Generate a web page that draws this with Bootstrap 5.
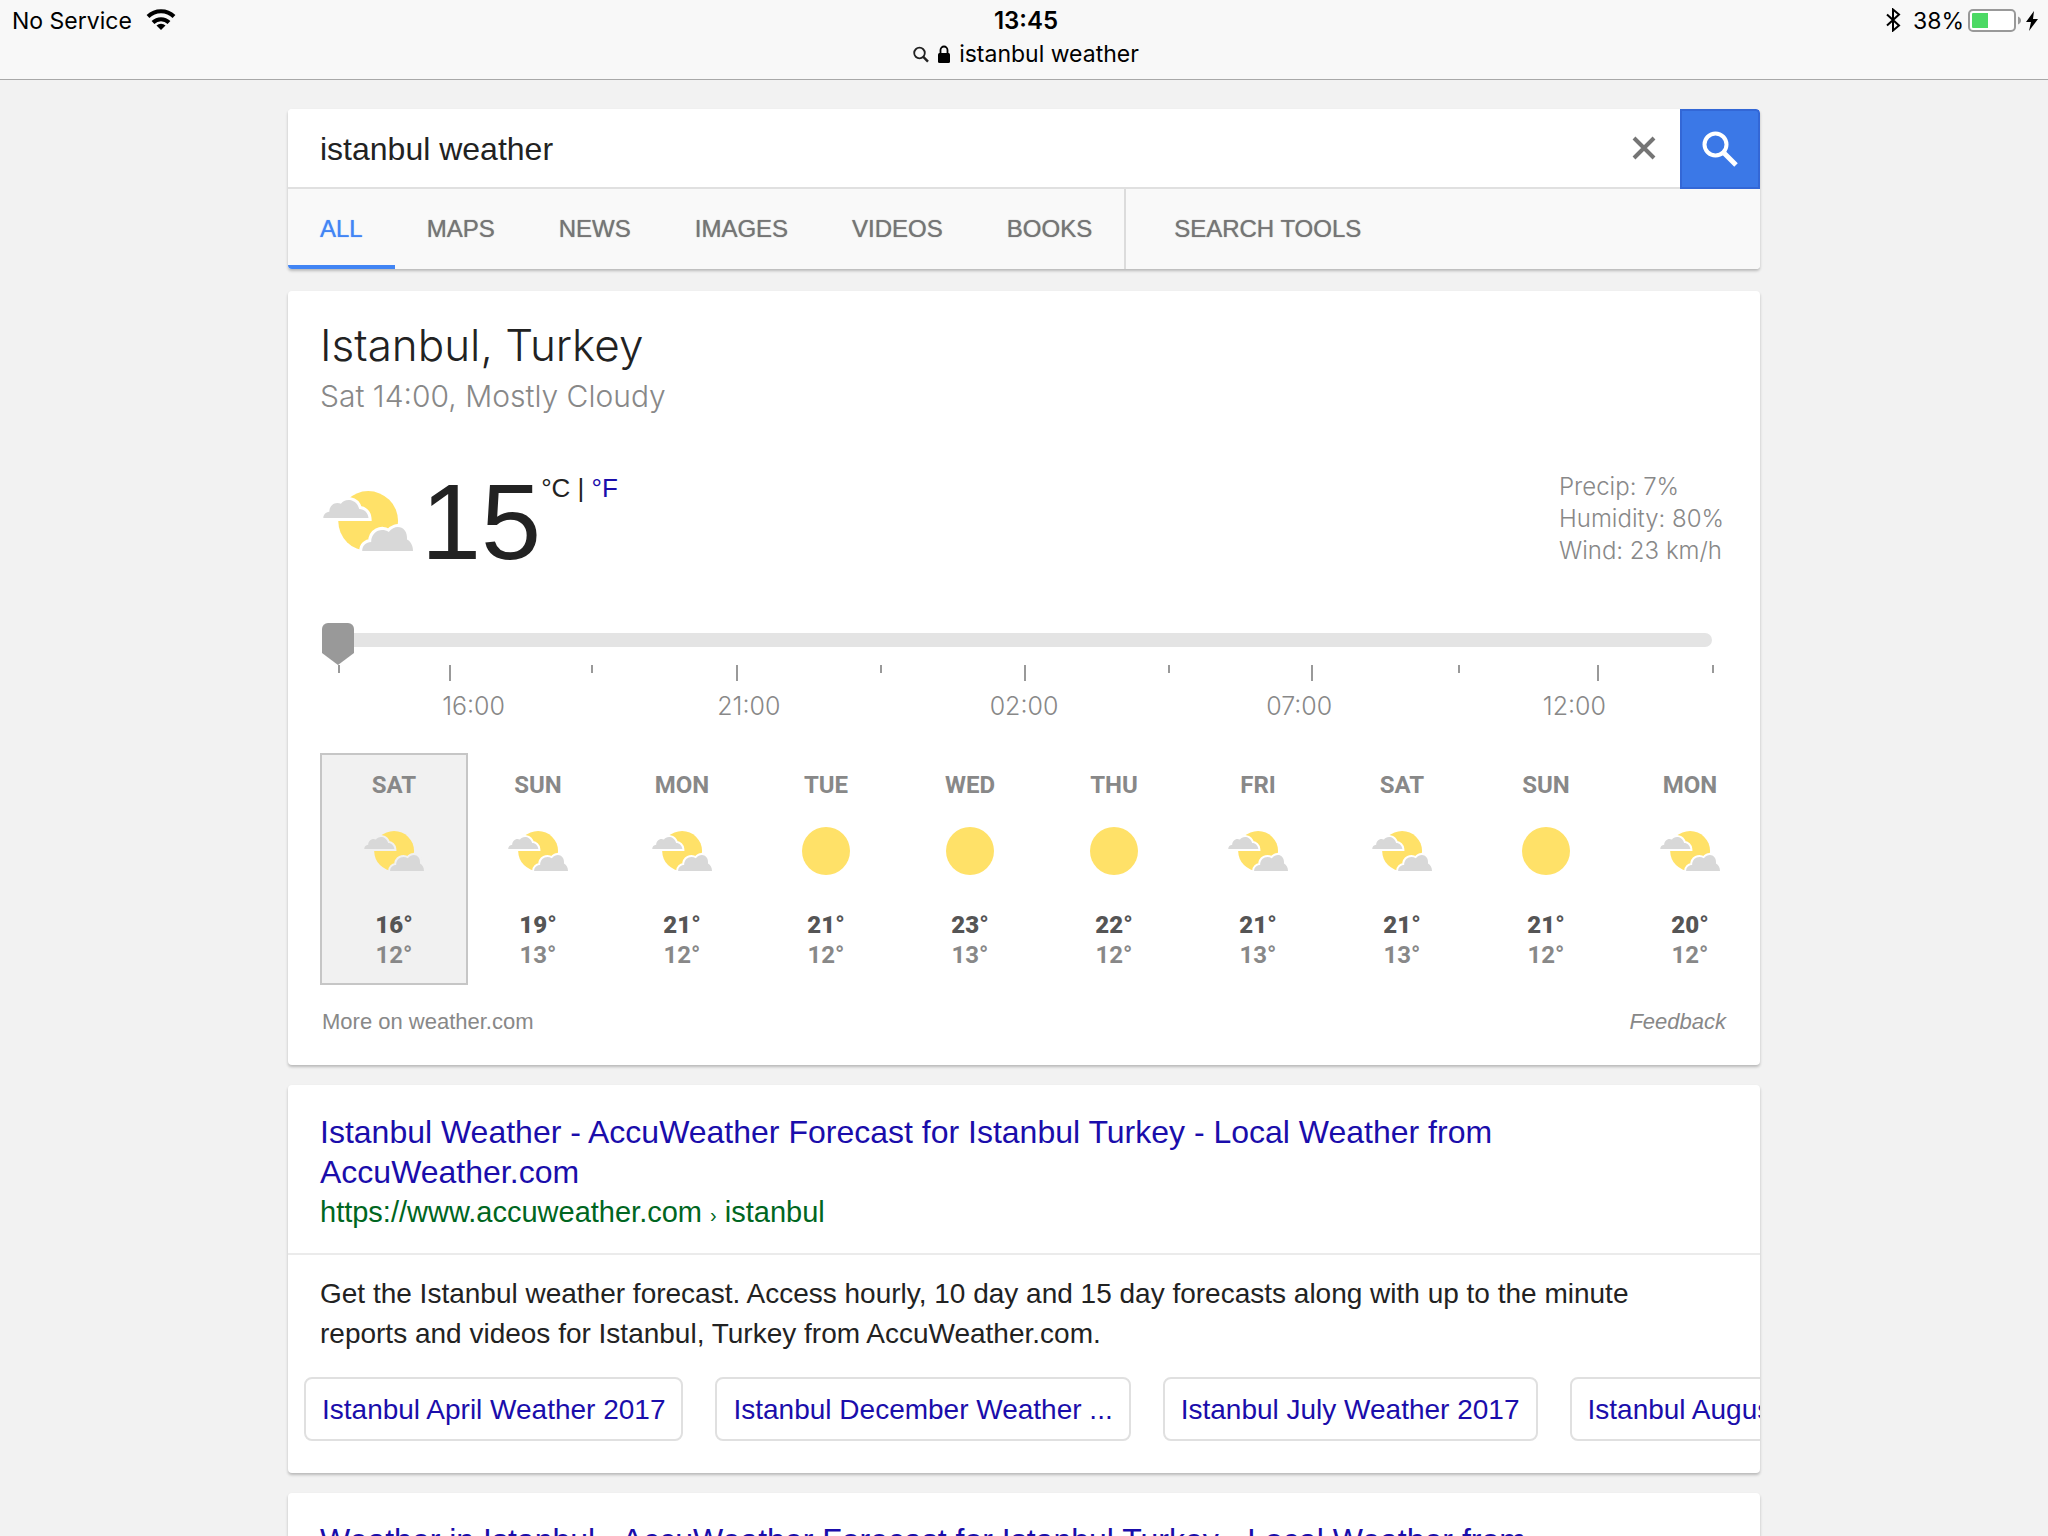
<!DOCTYPE html>
<html lang="en">
<head>
<meta charset="utf-8">
<meta name="viewport" content="width=device-width, initial-scale=1">
<title>istanbul weather</title>
<link href="https://cdn.jsdelivr.net/npm/bootstrap@5.3.0/dist/css/bootstrap.min.css" rel="stylesheet">
<style>
:root{--cell-bg:#fff;--ink:#222;--muted:#888;--link:#1a0dab}
body{background:#f2f2f2;color:var(--ink);font-family:"Liberation Sans",Arial,sans-serif;font-size:28px;line-height:40px;overflow:hidden;height:100vh}
a{color:var(--link);text-decoration:none}
.topbar{height:80px;background:#f8f8f8;border-bottom:1px solid #a8a8a8;font-family:Inter,sans-serif;font-size:23px;line-height:34px;color:#000;padding:4px 8px 0 12px}
.topbar>div{flex:1 1 0}
.clock{font-size:24px;line-height:33px}
.wifi{margin-left:13px}
.bluetooth{margin-right:10px}
.column{max-width:1472px;margin:29px auto 0}
.panel{background:#fff;border-radius:4px;box-shadow:0 2px 3px rgba(0,0,0,.24);margin-bottom:20px;overflow:hidden}
.panel.finder{margin-bottom:22px}
.query{height:78px;border:0;padding:2px 32px 0;font-size:32px;color:var(--ink);background:#fff;box-shadow:none!important;flex:1}
.rule{border-bottom:2px solid #e0e0e0}
.clear-btn{width:72px;border:0;background:#fff;padding:0 0 4px}
.search-btn{width:80px;height:80px;margin-bottom:-2px;border:2px solid #3367d6;background:#3b78e7;border-radius:0 4px 0 0;padding:0 0 4px}
.tabs{background:#f9f9f9;height:80px;font-size:24px;line-height:76px}
.tabs a{color:#757575;padding:2px 32px 0;text-shadow:0 0 1px #888;white-space:nowrap}
.tabs a.current{color:#4285f4;border-bottom:4px solid #4285f4;text-shadow:0 0 1px #69f}
.tabs .tools{border-left:2px solid #dcdcdc;padding-left:48px}
.thin{font-family:Inter,sans-serif;font-weight:300}
.report{padding:26px 32px 0}
.place{font-size:44px;line-height:56px;margin:0}
.when{font-size:30px;line-height:46px;color:var(--muted)}
.now{padding:51px 4px 0 3px}
.now-icon{margin:21px 8px 0 0}
.degrees{font-size:108px;line-height:96px;padding-top:4px}
.units{font-size:26px;line-height:32px;padding-top:2px}
.details{font-size:24px;line-height:32px;color:var(--muted);padding-top:1px}
.timeline{padding:53px 48px 31px 34px}
.hours{display:block;width:100%;height:34px;margin:0 0 8px;appearance:none;-webkit-appearance:none;background:transparent}
.hours::-webkit-slider-runnable-track{height:14px;border-radius:7px;background:#e4e4e4}
.hours::-webkit-slider-thumb{-webkit-appearance:none;width:32px;height:42px;margin-top:-10px;background:#999;border-radius:6px 6px 0 0;clip-path:polygon(0 0,100% 0,100% 30px,50% 100%,0 30px)}
.scale{height:16px;margin:0 -2px 0 16px}
.scale i{border-left:2px solid #999;height:8px;flex:1 1 0}
.scale i.long{height:16px}
.scale i:last-child{flex:none}
.times{font-size:25px;line-height:32px;color:var(--muted);padding:9px 0 0 14px}
.days{padding-left:32px;font-family:Roboto,sans-serif;font-weight:700;font-size:24px;line-height:30px;color:var(--muted)}
.day{flex:0 0 148px;height:232px;margin-right:-4px;border:2px solid transparent;padding-top:15px;text-align:center}
.day.picked{--cell-bg:#f1f1f1;background:#f1f1f1;border-color:#c6c6c6}
.day svg{display:block;margin:27px auto 35px;width:60px;height:48px}
.day b{display:block;color:#555}
.foot{font-size:22px;line-height:30px;padding:22px 34px 28px}
.foot a{color:var(--muted)}
.result-head{padding:27px 32px 21px}
.headline{font-size:32px;line-height:40px;margin:0}
.crumb{font-size:29px;color:#006621}
.crumb span{font-size:20px;line-height:20px}
.snippet{border-top:2px solid #ebebeb;padding:19px 72px 0 32px;margin:0}
.chips{gap:32px;padding:23px 0 32px 16px}
.chip{flex:none;border:2px solid #e0e0e0;border-radius:8px;padding:11px 16px 9px;white-space:nowrap}
</style>
</head>
<body>
<svg width="0" height="0" class="d-none" aria-hidden="true">
  <symbol id="partly" viewBox="0 0 271 180">
    <circle cx="136" cy="90" r="90" fill="#ffe168"/>
    <g fill="#d8d8d8" stroke-width="18" paint-order="stroke" style="stroke:var(--cell-bg)">
      <path d="M1 81C1 71 8 63 19 62C19 42 37 30 54 38C64 22 100 20 109 54C124 54 136 66 137 81Z"/>
      <path d="M118 180C118 164 130 153 145 153C145 122 175 108 198 123C220 96 256 108 253 146C264 152 271 164 271 180Z"/>
    </g>
  </symbol>
  <symbol id="sunny" viewBox="0 0 60 48"><circle cx="30" cy="24" r="24" fill="#ffe168"/></symbol>
</svg>

<header class="topbar d-flex">
  <div class="d-flex align-items-start">
    <span>No Service</span>
    <svg class="wifi mt-1" width="32" height="24" viewBox="0 0 32 24" fill="none" stroke="#000" stroke-width="4"><path d="M3 8.500a18.500 18.500 0 0 1 26 0M8 14.500a11.500 11.500 0 0 1 16 0"/><path d="M16 22l-4.500-4.500a6.500 6.500 0 0 1 9 0z" fill="#000" stroke="none"/></svg>
  </div>
  <div class="text-center">
    <div class="clock fw-semibold">13:45</div>
    <div class="d-flex justify-content-center align-items-center gap-2">
      <svg width="16" height="17" viewBox="0 0 16 17" fill="none" stroke="#222" stroke-width="1.800"><circle cx="6.500" cy="7" r="5.300"/><path d="M10.300 10.800L15 15.600" stroke-width="2.400"/></svg>
      <svg width="14" height="18" viewBox="0 0 14 18"><rect x="1" y="8" width="12" height="10" rx="1.500"/><path d="M3.500 9V5a3.500 3.500 0 0 1 7 0v4" fill="none" stroke="#000" stroke-width="1.800"/></svg>
      <span>istanbul weather</span>
    </div>
  </div>
  <div class="d-flex justify-content-end align-items-start">
    <svg class="bluetooth mt-1" width="20" height="24" viewBox="0 0 20 24" fill="none" stroke="#000" stroke-width="2"><path d="M4 6.500L16 17.500L10 22.500V1.500L16 6.500L4 17.500"/></svg>
    <span>38%</span>
    <svg class="ms-1 mt-1" width="72" height="26" viewBox="0 0 72 26"><rect x="1" y="2" width="46" height="21" rx="4" fill="#fff" stroke="#999" stroke-width="2"/><path d="M4 6a1 1 0 0 1 1-1h15v15H5a1 1 0 0 1-1-1z" fill="#4cd964"/><path d="M50 8.500c4 1.500 4 6.500 0 8z" fill="#999"/><path d="M66 3L58 14h5l-2 9 9-12h-5z"/></svg>
  </div>
</header>

<main class="column">
  <section class="panel finder">
    <form class="d-flex rule" role="search">
      <input class="form-control query rounded-0" type="text" aria-label="Search" value="istanbul weather">
      <button class="clear-btn" type="button" aria-label="Clear"><svg width="24" height="24" viewBox="0 0 24 24" stroke="#757575" stroke-width="4"><path d="M2 2l20 20M22 2L2 22"/></svg></button>
      <button class="search-btn" type="submit" aria-label="Search"><svg width="36" height="36" viewBox="0 0 36 36" fill="none" stroke="#fff" stroke-width="4"><circle cx="13.500" cy="13.500" r="11"/><path d="M21.500 21.500L34 34" stroke-width="5"/></svg></button>
    </form>
    <nav class="tabs d-flex">
      <a class="current" href="#">ALL</a><a href="#">MAPS</a><a href="#">NEWS</a><a href="#">IMAGES</a><a href="#">VIDEOS</a><a href="#">BOOKS</a><a class="tools" href="#">SEARCH TOOLS</a>
    </nav>
  </section>

  <section class="panel">
    <div class="report">
      <h1 class="place thin">Istanbul, Turkey</h1>
      <div class="when thin">Sat 14:00, Mostly Cloudy</div>
      <div class="now d-flex align-items-start">
        <svg class="now-icon" width="90" height="60" role="img" aria-label="Mostly cloudy"><use href="#partly"/></svg>
        <div class="degrees">15</div>
        <div class="units">°C | <a href="#">°F</a></div>
        <div class="details thin ms-auto">Precip: 7%<br>Humidity: 80%<br>Wind: 23 km/h</div>
      </div>
    </div>
    <div class="timeline">
      <input class="hours" type="range" min="0" max="24" value="0" aria-label="Hour of forecast">
      <div class="scale d-flex">
        <i style="flex-grow:111"></i><i class="long" style="flex-grow:142"></i><i style="flex-grow:145"></i><i class="long" style="flex-grow:144"></i><i style="flex-grow:144"></i><i class="long" style="flex-grow:144"></i><i style="flex-grow:143"></i><i class="long" style="flex-grow:147"></i><i style="flex-grow:139"></i><i class="long" style="flex-grow:115"></i><i></i>
      </div>
      <div class="times thin d-flex text-center">
        <span class="col">16:00</span><span class="col">21:00</span><span class="col">02:00</span><span class="col">07:00</span><span class="col">12:00</span>
      </div>
    </div>
    <div class="days d-flex overflow-hidden">
      <div class="day picked">SAT<svg><use href="#partly"/></svg><b>16°</b>12°</div>
      <div class="day">SUN<svg><use href="#partly"/></svg><b>19°</b>13°</div>
      <div class="day">MON<svg><use href="#partly"/></svg><b>21°</b>12°</div>
      <div class="day">TUE<svg><use href="#sunny"/></svg><b>21°</b>12°</div>
      <div class="day">WED<svg><use href="#sunny"/></svg><b>23°</b>13°</div>
      <div class="day">THU<svg><use href="#sunny"/></svg><b>22°</b>12°</div>
      <div class="day">FRI<svg><use href="#partly"/></svg><b>21°</b>13°</div>
      <div class="day">SAT<svg><use href="#partly"/></svg><b>21°</b>13°</div>
      <div class="day">SUN<svg><use href="#sunny"/></svg><b>21°</b>12°</div>
      <div class="day">MON<svg><use href="#partly"/></svg><b>20°</b>12°</div>
    </div>
    <div class="foot d-flex justify-content-between"><a href="#">More on weather.com</a><a class="fst-italic" href="#">Feedback</a></div>
  </section>

  <article class="panel">
    <div class="result-head">
      <h2 class="headline"><a href="#">Istanbul Weather - AccuWeather Forecast for Istanbul Turkey - Local Weather from AccuWeather.com</a></h2>
      <div class="crumb">https://www.accuweather.com <span>›</span> istanbul</div>
    </div>
    <p class="snippet">Get the Istanbul weather forecast. Access hourly, 10 day and 15 day forecasts along with up to the minute reports and videos for Istanbul, Turkey from AccuWeather.com.</p>
    <div class="chips d-flex overflow-hidden">
      <a class="chip" href="#">Istanbul April Weather 2017</a><a class="chip" href="#">Istanbul December Weather ...</a><a class="chip" href="#">Istanbul July Weather 2017</a><a class="chip" href="#">Istanbul August Weather 2017</a>
    </div>
  </article>

  <article class="panel">
    <div class="result-head">
      <h2 class="headline"><a href="#">Weather in Istanbul - AccuWeather Forecast for Istanbul Turkey - Local Weather from AccuWeather.com</a></h2>
    </div>
  </article>
</main>
<script src="https://cdn.jsdelivr.net/npm/bootstrap@5.3.0/dist/js/bootstrap.bundle.min.js"></script>
</body>
</html>
